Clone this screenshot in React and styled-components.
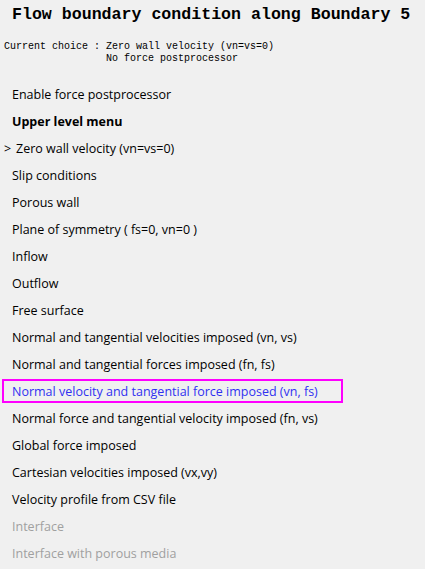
import React from "react";
import styled, { createGlobalStyle } from "styled-components";

const GlobalStyle = createGlobalStyle`
  html, body {
    margin: 0;
    padding: 0;
    background: #f0f0f0;
  }
`;

const items = [
  { label: "Enable force postprocessor" },
  { label: "Upper level menu", bold: true },
  { label: "Zero wall velocity (vn=vs=0)", current: true },
  { label: "Slip conditions" },
  { label: "Porous wall" },
  { label: "Plane of symmetry ( fs=0, vn=0 )" },
  { label: "Inflow" },
  { label: "Outflow" },
  { label: "Free surface" },
  { label: "Normal and tangential velocities imposed (vn, vs)" },
  { label: "Normal and tangential forces imposed (fn, fs)" },
  { label: "Normal velocity and tangential force imposed (vn, fs)", active: true },
  { label: "Normal force and tangential velocity imposed (fn, vs)" },
  { label: "Global force imposed" },
  { label: "Cartesian velocities imposed (vx,vy)" },
  { label: "Velocity profile from CSV file" },
  { label: "Interface", disabled: true },
  { label: "Interface with porous media", disabled: true },
];

const App = () => {
  return (
    <>
      <GlobalStyle />
      <Page>
        <Title>Flow boundary condition along Boundary 5</Title>
        <Choice>
          <span>Current choice : </span>
          <span>
            Zero wall velocity (vn=vs=0)
            <br />
            No force postprocessor
          </span>
        </Choice>
        <Menu>
          {items.map((it) => (
            <Item
              key={it.label}
              $bold={it.bold}
              $disabled={it.disabled}
              $active={it.active}
              $current={it.current}
            >
              {it.current && <Marker>&gt;</Marker>}
              {it.label}
            </Item>
          ))}
        </Menu>
      </Page>
    </>
  );
};

const Page = styled.div`
  width: 425px;
  height: 569px;
  background: #f0f0f0;
  overflow: hidden;
  display: flex;
  flex-direction: column;
`;

const Title = styled.h1`
  margin: 0;
  padding: 5px 0 0 12px;
  font-family: "Liberation Mono", monospace;
  font-weight: bold;
  font-size: 16.6px;
  line-height: 20px;
  color: #000;
  white-space: pre;
`;

const Choice = styled.div`
  display: flex;
  margin-top: 16px;
  padding-left: 4px;
  font-family: "Liberation Mono", monospace;
  font-size: 10px;
  line-height: 12px;
  color: #000;
  white-space: pre;
`;

const Menu = styled.ul`
  list-style: none;
  margin: 17px 0 0 0;
  padding: 0;
  display: flex;
  flex-direction: column;
  gap: 3px;
`;

const Item = styled.li`
  box-sizing: border-box;
  height: 24px;
  width: ${(p) => (p.$active ? "341px" : "auto")};
  margin-left: ${(p) => (p.$active ? "2px" : "0")};
  padding-left: ${(p) => (p.$active ? "8px" : p.$current ? "4px" : "12px")};
  border: ${(p) => (p.$active ? "2px solid #ff00ff" : "none")};
  display: flex;
  align-items: center;
  font-family: "Open Sans", "Noto Sans", sans-serif;
  font-size: 12.5px;
  font-weight: ${(p) => (p.$bold ? 700 : 400)};
  color: ${(p) => (p.$disabled ? "#a0a0a0" : p.$active ? "#3030f0" : "#000")};
  white-space: pre;
`;

const Marker = styled.span`
  display: inline-block;
  width: 12px;
`;

export default App;
